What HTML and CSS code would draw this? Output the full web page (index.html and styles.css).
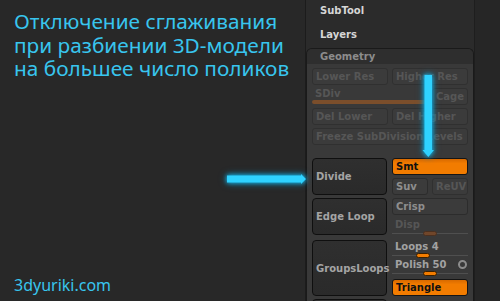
FILE: index.html
```html
<!DOCTYPE html>
<html lang="ru">

<head>
    <meta charset="UTF-8">
    <meta name="viewport" content="width=device-width, initial-scale=1.0">
    <title>Divide — Smt</title>
    <link rel="stylesheet" href="styles.css">
</head>

<body>
    <div class="page">
        <div class="intro">
            <h1 class="title">
                <span class="line">Отключение сглаживания</span>
                <span class="line">при разбиении 3D-модели</span>
                <span class="line">на большее число поликов</span>
            </h1>
            <div class="site">3dyuriki.com</div>
        </div>

        <div class="tray">
            <div class="menu-item">SubTool</div>
            <div class="menu-item">Layers</div>

            <div class="subpalette">
                <div class="sp-head">Geometry</div>
                <div class="sp-body">
                    <div class="pair">
                        <div class="btn off">Lower Res</div>
                        <div class="btn off">Higher Res</div>
                    </div>
                    <div class="sdiv-row">
                        <div class="sdiv">
                            <div class="label off-text">SDiv</div>
                            <div class="sdiv-bar"></div>
                        </div>
                        <div class="btn off cage">Cage</div>
                    </div>
                    <div class="pair">
                        <div class="btn off">Del Lower</div>
                        <div class="btn off">Del Higher</div>
                    </div>
                    <div class="btn off">Freeze SubDivision Levels</div>

                    <div class="group first">
                        <div class="big-btn h37">Divide</div>
                        <div class="side">
                            <div class="btn on">Smt</div>
                            <div class="pair">
                                <div class="btn">Suv</div>
                                <div class="btn off">ReUV</div>
                            </div>
                        </div>
                    </div>

                    <div class="group">
                        <div class="big-btn h37">Edge Loop</div>
                        <div class="side">
                            <div class="btn">Crisp</div>
                            <div class="slider disp">
                                <div class="label off-text">Disp</div>
                                <div class="track"><span class="knob dim" style="left: 31px"></span></div>
                            </div>
                        </div>
                    </div>

                    <div class="group">
                        <div class="big-btn h56">GroupsLoops</div>
                        <div class="side loops">
                            <div class="slider">
                                <div class="label">Loops 4</div>
                                <div class="track"><span class="knob" style="left: 24px"></span></div>
                            </div>
                            <div class="slider">
                                <div class="label">Polish 50 <span class="ring"></span></div>
                                <div class="track"><span class="knob" style="left: 31px"></span></div>
                            </div>
                            <div class="btn on tri">Triangle</div>
                        </div>
                    </div>

                    <div class="group">
                        <div class="big-btn h37"></div>
                    </div>
                </div>
            </div>
        </div>

        <div class="edge"></div>

        <!-- pointers -->
        <svg class="arrow arrow-right" width="84" height="14" viewBox="0 0 84 14">
            <path d="M2 3.5 H76 V2 L81 7 L76 12 V10.5 H2 Z" fill="#2fd2ff" />
        </svg>
        <svg class="arrow arrow-down" width="17" height="88" viewBox="0 0 17 88">
            <path d="M4.5 2 H12 V77 H14 L8.3 84 L2.5 77 H4.5 Z" fill="#2fd2ff" />
        </svg>
    </div>
</body>

</html>
```

FILE: styles.css
```css
body {
    margin: 0;
    background: #282828;
}

.page {
    position: relative;
    display: flex;
    height: 301px;
    overflow: hidden;
}

.intro {
    width: 305px;
    display: flex;
    flex-direction: column;
    justify-content: space-between;
    padding: 10px 0 0 14px;
    box-sizing: border-box;
    font-family: "Noto Sans", "Open Sans", sans-serif;
    color: #38c5ee;
}

.title {
    margin: 0;
    font-size: 20.8px;
    font-weight: normal;
    line-height: 23.5px;
}

.title .line {
    display: block;
    white-space: nowrap;
}

.site {
    font-size: 16px;
    line-height: 22px;
    margin-bottom: 5px;
}

.tray {
    width: 168px;
    background: #2b2b2b;
    border-left: 1px solid #1c1c1c;
    font-family: "DejaVu Sans", sans-serif;
    font-size: 10px;
    font-weight: bold;
}

.menu-item {
    height: 21px;
    line-height: 21px;
    margin-bottom: 3px;
    padding-left: 14px;
    color: #d6d6d6;
}

.subpalette {
    margin-top: 2px;
    border: 1px solid #1a1a1a;
    border-bottom: none;
    border-radius: 6px 6px 0 0;
    overflow: hidden;
}

.sp-head {
    height: 15px;
    line-height: 15px;
    padding-left: 13px;
    background: #2e2e2e;
    color: #8c8c8c;
}

.sp-body {
    background: #393939;
    padding: 4px 5px 0;
    display: flex;
    flex-direction: column;
    gap: 3px;
}

.pair {
    display: grid;
    grid-template-columns: 1fr 1fr;
    gap: 4px;
}

.btn {
    height: 17px;
    line-height: 16px;
    padding: 0 3px;
    box-sizing: border-box;
    border: 1px solid #2c2c2c;
    border-radius: 3px;
    background: #3b3b3b;
    color: #8e8e8e;
    white-space: nowrap;
    overflow: hidden;
}

.btn.off {
    color: #565656;
    border-color: #303030;
}

.btn.on {
    background: linear-gradient(#d86a00, #f27c00 30%, #f27c00);
    border-color: #151515;
    color: #111;
}

.sdiv-row {
    display: flex;
    gap: 4px;
    height: 17px;
}

.sdiv {
    flex: 1;
    display: flex;
    flex-direction: column;
}

.label {
    height: 11px;
    line-height: 11px;
    padding-left: 3px;
    color: #a2a2a2;
    display: flex;
    align-items: center;
    justify-content: space-between;
}

.sdiv .label {
    height: 12px;
    line-height: 12px;
}

.off-text {
    color: #565656;
}

.sdiv-bar {
    height: 4px;
    border-radius: 2px;
    background: #7b4e2b;
}

.cage {
    width: 36px;
}

.group {
    display: grid;
    grid-template-columns: 75px 1fr;
    gap: 5px;
    align-items: start;
}

.group.first {
    margin-top: 10px;
}

.big-btn {
    box-sizing: border-box;
    border: 1px solid #0f0f0f;
    border-radius: 4px;
    background: linear-gradient(#2f2f2f, #2a2a2a);
    color: #a4a4a4;
    padding-left: 3px;
    display: flex;
    align-items: center;
    white-space: nowrap;
}

.h37 {
    height: 37px;
}

.h56 {
    height: 56px;
}

.side {
    display: flex;
    flex-direction: column;
    gap: 3px;
}

.slider {
    height: 18px;
}

.disp {
    margin-top: 1px;
}

.loops {
    gap: 0;
    padding-top: 1px;
}

.track {
    position: relative;
    height: 7px;
    background: linear-gradient(transparent 3px, #4f4f4f 3px, #4f4f4f 4px, transparent 4px);
}

.knob {
    position: absolute;
    top: 1px;
    width: 14px;
    height: 5px;
    box-sizing: border-box;
    border-radius: 3px;
    background: #f27c00;
    border: 1px solid #3a2000;
}

.knob.dim {
    background: #70462a;
    border-color: #4a3020;
}

.ring {
    width: 9px;
    height: 9px;
    box-sizing: border-box;
    border: 2px solid #8c8c8c;
    border-radius: 50%;
    margin-right: 1px;
}

.tri {
    margin-top: 2px;
}

.edge {
    flex: 1;
    background: #262626;
    border-left: 1px solid #1e1e1e;
}

.arrow {
    position: absolute;
    filter: drop-shadow(0 0 2px #1cb6e8) drop-shadow(0 0 3px #0b7fa8);
}

.arrow-right {
    left: 225px;
    top: 172px;
}

.arrow-down {
    left: 420px;
    top: 73px;
}
```
